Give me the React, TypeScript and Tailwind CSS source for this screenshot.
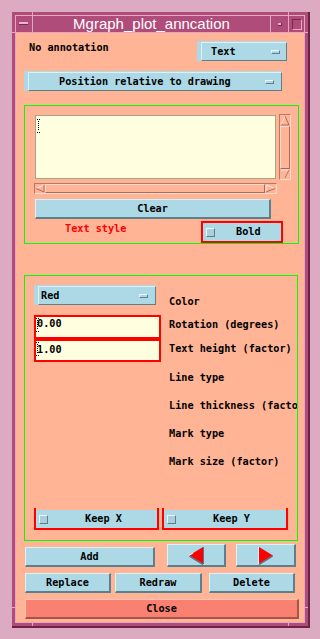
import React from "react";

// Motif style dialog: Mgraph_plot_anncation

const mono = "font-['DejaVu_Sans_Mono','Liberation_Mono',monospace] font-bold text-[10.2px] leading-[14px] whitespace-nowrap";
const raised = "bg-[#add8e6] border-t border-l border-t-[#dcf0f6] border-l-[#dcf0f6] border-r-2 border-b-2 border-r-[#5c7f8d] border-b-[#5c7f8d]";

function OptionMenu({ label, box, pad }: { label: string; box: string; pad: string }) {
  return (
    <div className={`${box} bg-[#add8e6] pl-[4px] pt-[1px] flex`}>
      <div className={`flex-1 flex items-center border-t border-l border-t-[#dcf0f6] border-l-[#dcf0f6] border-r border-b border-r-[#5c7f8d] border-b-[#5c7f8d] ${pad}`}>
        <span className={`${mono} flex-1`}>{label}</span>
        <span className="w-[9px] h-[4px] border-t border-l border-t-[#eaf6fa] border-l-[#eaf6fa] border-r border-b border-r-[#5c7f8d] border-b-[#5c7f8d]" />
      </div>
    </div>
  );
}

function Check() {
  return <span className="block w-[9px] h-[9px] bg-[#a9cfdc] border-t border-l border-t-[#eef8fb] border-l-[#eef8fb] border-r border-b border-r-[#5f7f8c] border-b-[#5f7f8c]" />;
}

function IBeam() {
  return (
    <svg width="3" height="14" viewBox="0 0 3 14" className="block">
      <rect x="0" y="0" width="1" height="1" fill="#000" />
      <rect x="2" y="0" width="1" height="1" fill="#000" />
      {[2, 4, 6, 8, 10].map((y) => (
        <rect key={y} x="1" y={y} width="1" height="1" fill="#000" />
      ))}
      <rect x="0" y="13" width="1" height="1" fill="#000" />
      <rect x="2" y="13" width="1" height="1" fill="#000" />
    </svg>
  );
}

function VScroll() {
  return (
    <div className="ml-[3px] w-[12px] h-[66px] border border-t-[#b47866] border-l-[#b47866] border-r-[#ffdccd] border-b-[#ffdccd] flex flex-col">
      <svg width="10" height="11" viewBox="0 0 10 11" className="block">
        <polyline points="1,10 5,1" stroke="#ffe6da" fill="none" />
        <polyline points="5,1 9,10 1,10" stroke="#b06c58" fill="none" />
      </svg>
      <div className="flex-1 border-t border-l border-t-[#ffdccd] border-l-[#ffdccd] border-r border-b border-r-[#a8685a] border-b-[#a8685a]" />
      <svg width="10" height="10" viewBox="0 0 10 10" className="block">
        <polyline points="1,1 9,1 5,9" stroke="#ffe6da" fill="none" />
        <polyline points="5,9 9,1" stroke="#b06c58" fill="none" />
      </svg>
    </div>
  );
}

function HScroll() {
  return (
    <div className="ml-[9px] mt-[3px] w-[243px] h-[11px] border border-t-[#b47866] border-l-[#b47866] border-r-[#ffdccd] border-b-[#ffdccd] flex">
      <svg width="10" height="9" viewBox="0 0 10 9" className="block">
        <polyline points="9,1 1,4.5" stroke="#ffe6da" fill="none" />
        <polyline points="1,4.5 9,8 9,1" stroke="#b06c58" fill="none" />
      </svg>
      <div className="flex-1 border-t border-l border-t-[#ffdccd] border-l-[#ffdccd] border-r border-b border-r-[#a8685a] border-b-[#a8685a]" />
      <svg width="11" height="9" viewBox="0 0 11 9" className="block">
        <polyline points="1,8 1,1 10,4.5" stroke="#ffe6da" fill="none" />
        <polyline points="10,4.5 1,8" stroke="#b06c58" fill="none" />
      </svg>
    </div>
  );
}

function ArrowBtn({ box, dir }: { box: string; dir: "left" | "right" }) {
  return (
    <div className={`${box} ${raised} flex items-center justify-center`}>
      {dir === "left" ? (
        <svg width="17" height="19" viewBox="0 0 17 19" className="block">
          <polygon points="1,9.5 15,1 15,18" fill="#ff0000" />
          <polyline points="1,9.5 5,7" stroke="#ffffff" fill="none" />
          <polyline points="1.5,10 15,18.5" stroke="#5f7080" strokeWidth="1.5" fill="none" />
          <polyline points="15.5,1 15.5,18" stroke="#5f7080" fill="none" />
        </svg>
      ) : (
        <svg width="17" height="19" viewBox="0 0 17 19" className="block">
          <polygon points="2,1 2,18 16,9.5" fill="#ff0000" />
          <polyline points="1.5,1 1.5,18" stroke="#ffffff" fill="none" />
          <polyline points="2,18.5 15.5,10" stroke="#5f7080" strokeWidth="1.5" fill="none" />
        </svg>
      )}
    </div>
  );
}

function Toggle({ box, label, gap }: { box: string; label: string; gap: string }) {
  return (
    <div className={`${box} h-[22px] border-x-2 border-b-2 border-[#ff0000] pt-[2px]`}>
      <div className="h-full bg-[#add8e6] flex items-center pl-[3px]">
        <Check />
        <span className={`${mono} ${gap}`}>{label}</span>
      </div>
    </div>
  );
}

function TitleBar() {
  return (
    <div className="h-[17px] flex border-b border-b-[#e4a6c0] bg-[#b04c7a]">
      <div className="w-[17px] border-r border-r-[#e4a6c0] pl-[3px] pt-[6px]">
        <div className="w-[9px] h-[3px] bg-[#eab6cc] border-b border-b-[#7a2a50]" />
      </div>
      <div className="w-[237px] flex items-center justify-center text-white font-['Liberation_Sans',sans-serif] text-[15px] leading-[16px]">
        Mgraph_plot_anncation
      </div>
      <div className="w-[18px] border-l border-l-[#e4a6c0] flex items-center justify-center">
        <div className="w-[4px] h-[3px] bg-[#e8b0c8] border-r border-b border-r-[#7a2a50] border-b-[#7a2a50]" />
      </div>
      <div className="w-[16px] border-l border-l-[#e4a6c0] flex items-center justify-center">
        <div className="w-[10px] h-[11px] border border-t-[#7a2a50] border-l-[#7a2a50] border-r-[#e8a8c4] border-b-[#e8a8c4]" />
      </div>
    </div>
  );
}

const labels: { text: string; mt: string }[] = [
  { text: "Color", mt: "mt-[19px]" },
  { text: "Rotation (degrees)", mt: "mt-[9px]" },
  { text: "Text height (factor)", mt: "mt-[10px]" },
  { text: "Line type", mt: "mt-[15px]" },
  { text: "Line thickness (factor)", mt: "mt-[14px]" },
  { text: "Mark type", mt: "mt-[14px]" },
  { text: "Mark size (factor)", mt: "mt-[14px]" },
];

export default function App() {
  return (
    <div className="w-[320px] h-[639px] bg-[#dcaac1] pt-[12px] pl-[12px] overflow-hidden text-black">
      <div className="relative w-[298px] h-[616px] bg-[#b04c7a] border-r-2 border-b-2 border-r-[#6b2447] border-b-[#6b2447] p-[3px]">
        <div className="h-full flex flex-col border border-[#e4a6c0]">
          <TitleBar />

          <div className="flex-1 bg-[#ffb496] flex flex-col">
            {/* annotation type */}
            <div className="mt-[8px] h-[20px] flex items-start">
              <span className={`${mono} ml-[13px] w-[168px]`}>No annotation</span>
              <OptionMenu label="Text" box="w-[90px] h-[20px]" pad="pl-[9px] pr-[6px]" />
            </div>

            <OptionMenu label="Position relative to drawing" box="ml-[8px] mt-[10px] w-[258px] h-[20px]" pad="pl-[30px] pr-[7px]" />

            {/* text box */}
            <div className="ml-[8px] mt-[14px] w-[275px] h-[139px] border border-[#00ff00] flex flex-col">
              <div className="mt-[8px] ml-[10px] h-[66px] flex items-start">
                <div className="mt-[1px] w-[241px] h-[64px] bg-[#ffffe0] border border-[#a8a48a] pl-[1px] pt-[3px]">
                  <IBeam />
                </div>
                <VScroll />
              </div>
              <HScroll />
              <div className={`${raised} ml-[10px] mt-[5px] w-[236px] h-[20px] flex items-center justify-center`}>
                <span className={mono}>Clear</span>
              </div>
              <div className="mt-[2px] h-[22px] flex items-start">
                <span className={`${mono} w-[176px] pl-[40px] mt-[1px] text-[#ff0000]`}>Text style</span>
                <div className="w-[82px] h-[22px] border-2 border-[#ff0000] bg-[#add8e6] flex items-center pl-[3px]">
                  <Check />
                  <span className={`${mono} ml-[21px]`}>Bold</span>
                </div>
              </div>
            </div>

            {/* style box */}
            <div className="ml-[8px] mt-[31px] w-[274px] h-[266px] border border-[#00ff00] overflow-hidden flex flex-col">
              <div className="h-[193px] flex">
                <div className="ml-[9px] w-[127px] shrink-0 flex flex-col">
                  <OptionMenu label="Red" box="mt-[9px] w-[122px] h-[20px]" pad="pl-[2px] pr-[7px]" />
                  <div className="relative mt-[10px] h-[24px] border-2 border-[#ff0000] bg-[#ffffe0] pl-[1px] flex items-start">
                    <span className={mono}>0.00</span>
                    <span className="absolute left-0 top-[1px]"><IBeam /></span>
                  </div>
                  <div className="relative h-[23px] border-2 border-[#ff0000] bg-[#ffffe0] pl-[1px] pt-[2px] flex items-start">
                    <span className={mono}>1.00</span>
                    <span className="absolute left-0 top-[1px]"><IBeam /></span>
                  </div>
                </div>
                <div className="ml-[8px] shrink-0 flex flex-col">
                  {labels.map((l) => (
                    <span key={l.text} className={`${mono} ${l.mt}`}>{l.text}</span>
                  ))}
                </div>
              </div>
              <div className="mt-[39px] ml-[9px] flex gap-[3px]">
                <Toggle box="w-[125px]" label="Keep X" gap="ml-[37px]" />
                <Toggle box="w-[126px]" label="Keep Y" gap="ml-[37px]" />
              </div>
            </div>

            {/* actions */}
            <div className="mt-[3px] h-[23px] flex items-end">
              <div className={`${raised} ml-[9px] w-[130px] h-[20px] flex items-center justify-center`}>
                <span className={mono}>Add</span>
              </div>
              <ArrowBtn box="ml-[12px] w-[59px] h-[23px]" dir="left" />
              <ArrowBtn box="ml-[10px] w-[60px] h-[23px]" dir="right" />
            </div>
            <div className="mt-[6px] h-[20px] flex">
              <div className={`${raised} ml-[9px] w-[86px] h-[20px] flex items-center justify-center`}>
                <span className={mono}>Replace</span>
              </div>
              <div className={`${raised} ml-[4px] w-[87px] h-[20px] flex items-center justify-center`}>
                <span className={mono}>Redraw</span>
              </div>
              <div className={`${raised} ml-[7px] w-[86px] h-[20px] flex items-center justify-center`}>
                <span className={mono}>Delete</span>
              </div>
            </div>
            <div className="ml-[9px] mt-[6px] w-[274px] h-[20px] bg-[#fa8072] border-t border-l border-t-[#ffc2b6] border-l-[#ffc2b6] border-r-2 border-b-2 border-r-[#a4544a] border-b-[#a4544a] flex items-center justify-center">
              <span className={mono}>Close</span>
            </div>
          </div>
        </div>

        {/* frame resize ticks */}
        <span className="absolute left-[20px] top-0 w-px h-[3px] bg-[#e4a6c0]" />
        <span className="absolute left-[276px] top-0 w-px h-[3px] bg-[#e4a6c0]" />
        <span className="absolute left-[20px] top-[611px] w-px h-[3px] bg-[#e4a6c0]" />
        <span className="absolute left-[276px] top-[611px] w-px h-[3px] bg-[#e4a6c0]" />
        <span className="absolute left-0 top-[20px] w-[3px] h-px bg-[#e4a6c0]" />
        <span className="absolute left-0 top-[595px] w-[3px] h-px bg-[#e4a6c0]" />
        <span className="absolute left-[293px] top-[20px] w-[3px] h-px bg-[#e4a6c0]" />
        <span className="absolute left-[293px] top-[595px] w-[3px] h-px bg-[#e4a6c0]" />
      </div>
    </div>
  );
}
